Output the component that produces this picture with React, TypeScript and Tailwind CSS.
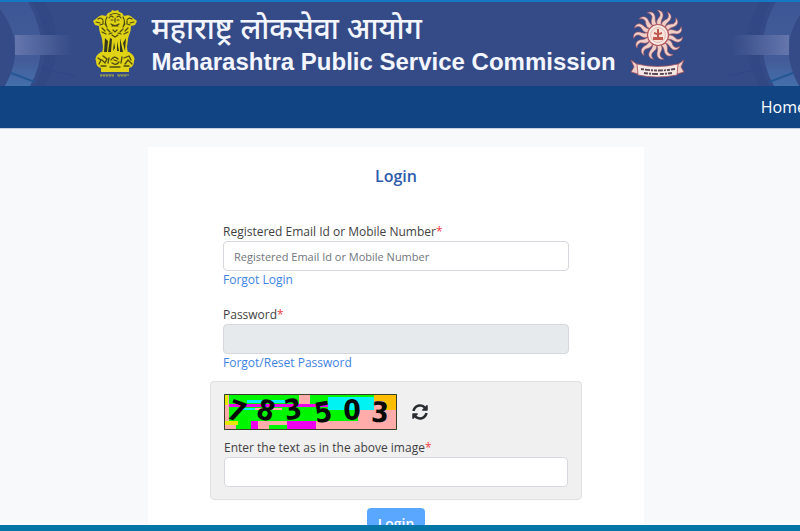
import type { InputHTMLAttributes, ReactNode } from 'react';

const RAYS = [12, 36, 60, 84, 108, 132, 156, 180, 204, 228, 252, 276, 300, 324, 348];

function NationalEmblem() {
  return (
    <svg viewBox="0 0 44 68" className="h-[68px] w-11 shrink-0" role="img" aria-label="National emblem">
      <g fill="#e0d316">
        <path d="M15 3l3-1 1-2 3 1 3-1 1 2 3 1 2 3c5-2 7 0 9 2l4 3-2 4-4 1c0 6-2 8-3 13l-1 8 1 8H9l1-8-1-8c-1-5-3-7-3-13l-4-1-2-4 4-3c2-2 4-4 9-2z" />
        <path d="M8 42q14-3 28 0 7 4 5 9 0 6-5 7H8q-5-1-5-7-2-5 5-9z" />
        <path d="M8 58h28v4H8z" />
      </g>
      <g fill="none" stroke="#4c4a12" strokeWidth="1.2" strokeLinecap="round">
        <path d="M17 5q5-3 10 0M16 8q2-3 4-1M28 8q-2-3-4-1M18 10h2m4 0h2M22 8v4M18 14q4 3 8 0M19 16h6M3 12l4 1M5 9q3-2 5 1M7 15l3-1M10 11v3M41 12l-4 1M39 9q-3-2-5 1M37 15l-3-1M34 11v3" />
        <path d="M14 7q-3 5 0 10M30 7q3 5 0 10M9 18l3 3M9 22l4 2M35 18l-3 3M35 22l-4 2M14 19l3 3M30 19l-3 3M20 20l2 2 2-2M16 24l3-1M25 23l3 1M12 14l2 3M32 14l-2 3M19 25l3 2 3-2" />
      </g>
      <g fill="#34371f">
        <path d="M12 28l3 3-1 11h-3zM17 28l2 1-1 13h-3zM21 32l1 6-2 3zM24 31l2 10h-2zM27 28l3 14h-3zM33 28l-1 13-2-8z" />
      </g>
      <g fill="none" stroke="#4c4a12" strokeWidth="1.3" strokeLinecap="round">
        <path d="M18 50q3-5 7-1M19 53q4 3 7-1M21 50l3 1M5 48l3 2-2 4M10 46l4 3-2 4-3-3M16 48l-1 5M29 47l-1 6M31 48l5-2 2 4M32 54l3-4 4 4M8 56h5M31 56h5M17 57h10" />
      </g>
      <path d="M7 65h14M24 65h12M8 65v2m3-2v2m3-2v2m3-2v2m3-2v2m6-2v2m3-2v2m3-2v2" stroke="#a9a745" strokeWidth="1" />
    </svg>
  );
}

function CommissionSeal() {
  return (
    <svg viewBox="0 0 55 68" className="h-[68px] w-[55px] shrink-0" role="img" aria-label="Commission seal">
      <g fill="#f0cfc8" stroke="#a2525f" strokeWidth="0.6">
        {RAYS.map((angle) => (
          <path
            key={angle}
            d="M26 16C22 12 25 9 26 6c0-3-2-4-4-5 4-1 7 1 7 5 0 3-2 5 1 10z"
            transform={`rotate(${angle} 28 25)`}
          />
        ))}
      </g>
      <circle cx="28" cy="25" r="10.500" fill="#f7e9e4" stroke="#b3555c" strokeWidth="1.2" />
      <circle cx="28" cy="25" r="7.500" fill="#f6e3da" stroke="#e0aca5" strokeWidth="0.8" />
      <path d="M27 19h2v4l3-1v2l-3 1v2h4v3H23v-3h4v-2l-3-1v-2l3 1z" fill="#c0584d" />
      <path d="M1 50l7 5v9l-7-2 3-5zM54 50l-7 5v9l7-2-3-5z" fill="#f0cfc9" stroke="#a2525f" strokeWidth="0.8" />
      <path d="M7 54q21 5 41 0l-1 11q-20 4-39 0z" fill="#f3e8e5" stroke="#a9565e" strokeWidth="0.8" />
      <g fill="none" stroke="#5b4852">
        <path d="M11 59q17 3 34 0" strokeWidth="1.8" strokeDasharray="3 1 5 1 2 1" />
        <path d="M14 63q14 2 28 0" strokeWidth="1.8" strokeDasharray="4 1 2 1 6 2" />
      </g>
    </svg>
  );
}

function BannerRing({ id, className }: { id: string; className: string }) {
  return (
    <svg viewBox="0 0 100 84" className={className} aria-hidden="true">
      <defs>
        <linearGradient id={id}>
          <stop offset="0" stopColor="#6576ad" />
          <stop offset="1" stopColor="#354b87" />
        </linearGradient>
        <linearGradient id={`${id}-ring`} x1="0" y1="0" x2="0" y2="1">
          <stop offset="0" stopColor="#3d5796" />
          <stop offset="0.7" stopColor="#435c99" />
          <stop offset="1" stopColor="#4470ac" />
        </linearGradient>
      </defs>
      <path d="M33 0q24 43 2 84h10q23-41 0-84z" fill="#314884" />
      <path d="M0 0h28q25 43 2 84H5q23-41-5-77z" fill={`url(#${id}-ring)`} />
      <path d="M40 23l12-8M41 66l34 8M46 50h25" stroke="#2d4786" strokeWidth="1" />
      <path d="M15 33h57v20H15z" fill={`url(#${id})`} />
      <path d="M11 71l24 9" stroke="#245794" strokeWidth="2" />
    </svg>
  );
}

function Captcha() {
  return (
    <svg viewBox="0 0 173 36" className="h-9 w-[173px]" role="img" aria-label="Captcha">
      <path d="M0 0h173v36H0z" fill="#00f500" />
      <path d="M1 1h4v27H1z" fill="#ffacaa" />
      <path d="M1 1h3v10H1zM1 27h13v4H1z" fill="#e8e800" />
      <path d="M1 31h11v4H1zM34 27h11v8H34zM75 1h11v9H75zM29 14h29v2H29z" fill="#ffacaa" />
      <path d="M23 6h42v3H23zM15 14h16v2H15zM104 3h46v13h-46z" fill="#00f3f3" />
      <path d="M5 10h99v3H5zM27 27h7v8h-7zM63 27h29v8H63z" fill="#ed00ed" />
      <path d="M92 27h42V16h38v19H92z" fill="#ffacaa" />
      <path d="M150 1h22v15h-22z" fill="#ffbd00" />
      <path d="M150 7h10v9h-10zM45 27h18v4H45z" fill="#ffacaa" />
      <g fill="#080808" fontFamily="DejaVu Sans Condensed, DejaVu Sans" fontWeight="700" fontSize="28" textAnchor="middle">
        <text x="13" y="27" transform="rotate(20 13 17)">7</text>
        <text x="42" y="26" transform="rotate(17 42 16)">8</text>
        <text x="69" y="25" transform="rotate(-9 69 16)">3</text>
        <text x="99" y="28" transform="rotate(-9 99 18)">5</text>
        <text x="128" y="26">0</text>
        <text x="156" y="28" transform="rotate(3 156 18)">3</text>
      </g>
      <path d="M0.500 0.500h172v35H0.500z" fill="none" stroke="#39402a" />
    </svg>
  );
}

function RefreshIcon() {
  return (
    <svg viewBox="0 0 512 512" className="h-4 w-4" fill="#292c30" aria-hidden="true">
      <path d="M370.720 133.280C339.458 104.008 298.888 87.962 255.848 88c-77.458.068-144.328 53.178-162.791 126.850-1.344 5.363-6.122 9.150-11.651 9.150H24.103c-7.498 0-13.194-6.807-11.807-14.176C33.933 94.924 134.813 8 256 8c66.448 0 126.791 26.136 171.315 68.685L463.030 40.970C478.149 25.851 504 36.559 504 57.941V192c0 13.255-10.745 24-24 24H345.941c-21.382 0-32.090-25.851-16.971-40.971l41.750-41.749zM32 296h134.059c21.382 0 32.090 25.851 16.971 40.971l-41.750 41.750c31.262 29.273 71.835 45.319 114.876 45.280 77.418-.070 144.315-53.144 162.787-126.849 1.344-5.363 6.122-9.150 11.651-9.150h57.304c7.498 0 13.194 6.807 11.807 14.176C478.067 417.076 377.187 504 256 504c-66.448 0-126.791-26.136-171.315-68.685L48.970 471.030C33.851 486.149 8 475.441 8 454.059V320c0-13.255 10.745-24 24-24z" />
    </svg>
  );
}

interface FieldProps extends InputHTMLAttributes<HTMLInputElement> {
  id: string;
  label: string;
  children?: ReactNode;
}

function Field({ id, label, children, ...input }: FieldProps) {
  return (
    <div className="flex flex-col items-start text-xs leading-[18px]">
      <label htmlFor={id} className="text-[#3f3f42]">
        {label}<span className="text-[#f04040]">*</span>
      </label>
      <input
        id={id}
        className="h-[30px] w-full rounded border border-[#d5d8dc] bg-white px-2.5 text-[11px] text-[#495057] placeholder:text-[#70767c] disabled:bg-[#e7eaed]"
        {...input}
      />
      {children}
    </div>
  );
}

export default function App() {
  return (
    <div className="flex h-screen flex-col overflow-hidden bg-[#f8f9fb] font-['Open_Sans','Noto_Sans',sans-serif]">
      <header className="relative shrink-0 overflow-hidden border-t-2 border-[#1478c5] bg-[#354b87]">
        <BannerRing id="beam-left" className="absolute top-0 left-0 h-full" />
        <BannerRing id="beam-right" className="absolute top-0 -right-1 h-full -scale-x-100" />
        <div className="relative flex h-[84px] items-center justify-center gap-3.5 pr-[22px]">
          <NationalEmblem />
          <div className="whitespace-nowrap text-[#f3f6ff]">
            <p className="font-['Noto_Sans',sans-serif] text-[30px] leading-9 font-medium">महाराष्ट्र लोकसेवा आयोग</p>
            <h1 className="font-['Liberation_Sans',Arial,sans-serif] text-2xl leading-8 font-bold">
              Maharashtra Public Service Commission
            </h1>
          </div>
          <CommissionSeal />
        </div>
      </header>

      <nav className="flex h-[43px] shrink-0 items-center justify-end overflow-hidden border-b border-[#c5cfdf] bg-[#104483]">
        <a href="#home" className="-mr-1.5 text-base leading-6 text-white">Home</a>
      </nav>

      <main className="min-h-0 flex-1 overflow-hidden pt-[18px] pr-2">
        <form className="mx-auto flex w-full max-w-[496px] flex-col bg-white px-[62px] pt-[17px] pb-8">
          <h2 className="text-center text-base leading-6 font-semibold text-[#2e5cac]">Login</h2>
          <div className="flex flex-col gap-[17px] px-[13px] pt-[35px]">
            <Field id="user" label="Registered Email Id or Mobile Number" placeholder="Registered Email Id or Mobile Number">
              <a href="#forgot-login" className="text-[#3d83e3]">Forgot Login</a>
            </Field>
            <Field id="password" label="Password" type="password" disabled>
              <a href="#reset-password" className="text-[#3d83e3]">Forgot/Reset Password</a>
            </Field>
          </div>
          <div className="mt-[9px] flex flex-col gap-[9px] rounded border border-[#e0e0e2] bg-[#f0f0f1] px-[13px] py-3">
            <div className="flex items-center gap-[15px]">
              <Captcha />
              <button type="button" aria-label="Refresh captcha"><RefreshIcon /></button>
            </div>
            <Field id="captcha" label="Enter the text as in the above image" />
          </div>
          <button type="submit" className="mt-2 self-center rounded bg-[#5aa7ff] px-[11px] py-1.5 text-sm leading-5 font-semibold text-white">
            Login
          </button>
        </form>
      </main>

      <footer className="h-1.5 shrink-0 bg-[#0375a6]" />
    </div>
  );
}
